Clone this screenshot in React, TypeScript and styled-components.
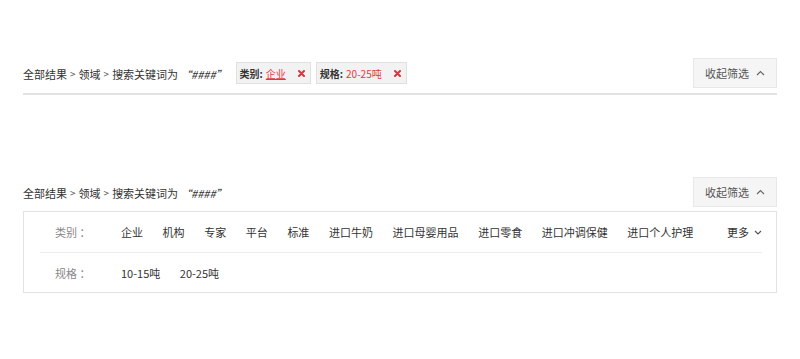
import React from 'react';
import styled, { createGlobalStyle } from 'styled-components';

const GlobalStyle = createGlobalStyle`
  body {
    margin: 0;
    background: #fff;
    font-family: "Noto Sans CJK SC", "Noto Sans", sans-serif;
    font-size: 11px;
    color: #333;
  }
`;

const categories = ['企业', '机构', '专家', '平台', '标准', '进口牛奶', '进口母婴用品', '进口零食', '进口冲调保健', '进口个人护理'];
const specs = ['10-15吨', '20-25吨'];

const ChevronUp: React.FC = () => (
  <svg width="9" height="6" viewBox="0 0 9 6">
    <polyline points="1,5 4.5,1.5 8,5" fill="none" stroke="#666" strokeWidth="1.2" />
  </svg>
);

const ChevronDown: React.FC = () => (
  <svg width="8" height="5" viewBox="0 0 8 5">
    <polyline points="1,1 4,4 7,1" fill="none" stroke="#555" strokeWidth="1.2" />
  </svg>
);

const CloseMark: React.FC = () => (
  <svg width="7" height="7" viewBox="0 0 7 7">
    <path d="M1 1 L6 6 M6 1 L1 6" stroke="#d9363e" strokeWidth="2" strokeLinecap="round" />
  </svg>
);

const Crumbs: React.FC = () => (
  <Breadcrumb>
    <span>全部结果</span>
    <Sep>&gt;</Sep>
    <span>领域</span>
    <Sep>&gt;</Sep>
    <span>搜索关键词为</span>
    <Keyword>“####”</Keyword>
  </Breadcrumb>
);

const CollapseButton: React.FC = () => (
  <ToggleButton>
    <span>收起筛选</span>
    <ChevronUp />
  </ToggleButton>
);

const App: React.FC = () => {
  return (
    <Page>
      <GlobalStyle />
      <Section>
        <Bar underline>
          <Left>
            <Crumbs />
            <Tags>
              <Tag>
                <TagLabel>类别:</TagLabel>
                <TagValue underline>企业</TagValue>
                <CloseMark />
              </Tag>
              <Tag>
                <TagLabel>规格:</TagLabel>
                <TagValue>20-25吨</TagValue>
                <CloseMark />
              </Tag>
            </Tags>
          </Left>
          <CollapseButton />
        </Bar>
      </Section>

      <Section second>
        <Bar>
          <Crumbs />
          <CollapseButton />
        </Bar>
        <Panel>
          <FilterRow divided>
            <Label>类别 ：</Label>
            <Values>
              {categories.map((c) => (
                <Value key={c}>{c}</Value>
              ))}
            </Values>
            <More>
              <span>更多</span>
              <ChevronDown />
            </More>
          </FilterRow>
          <FilterRow>
            <Label>规格 ：</Label>
            <Values>
              {specs.map((s) => (
                <Value key={s}>{s}</Value>
              ))}
            </Values>
          </FilterRow>
        </Panel>
      </Section>
    </Page>
  );
};

export default App;

const Page = styled.div`
  display: flex;
  flex-direction: column;
  padding: 58px 23px 0;
`;

const Section = styled.div<{ second?: boolean }>`
  display: flex;
  flex-direction: column;
  margin-top: ${(p) => (p.second ? '82px' : '0')};
`;

const Bar = styled.div<{ underline?: boolean }>`
  display: flex;
  align-items: center;
  justify-content: space-between;
  padding-bottom: ${(p) => (p.underline ? '5px' : '4px')};
  border-bottom: ${(p) => (p.underline ? '2px solid #e2e2e2' : 'none')};
`;

const Left = styled.div`
  display: flex;
  align-items: center;
`;

const Breadcrumb = styled.div`
  display: flex;
  align-items: center;
  color: #333;
  line-height: 16px;
  padding-top: 2px;
`;

const Sep = styled.span`
  margin: 0 3px;
  font-size: 10px;
  color: #555;
`;

const Keyword = styled.span`
  margin-left: 2px;
  font-style: italic;
`;

const Tags = styled.div`
  display: flex;
  gap: 5px;
  margin-left: 9px;
`;

const Tag = styled.div`
  display: flex;
  align-items: center;
  height: 20px;
  padding: 0 5px 0 3px;
  background: #f2f2f2;
  border: 1px solid #e0e0e0;
  color: #333;
  font-size: 10px;

  & > svg {
    margin-left: 12px;
  }
`;

const TagLabel = styled.span`
  font-weight: 700;
  margin-right: 3px;
`;

const TagValue = styled.span<{ underline?: boolean }>`
  color: #e4393c;
  text-decoration: ${(p) => (p.underline ? 'underline' : 'none')};
`;

const ToggleButton = styled.div`
  display: flex;
  align-items: center;
  justify-content: center;
  gap: 7px;
  width: 82px;
  height: 28px;
  background: #f5f5f5;
  border: 1px solid #e8e8e8;
  color: #555;
  font-size: 11px;

  & > svg {
    margin-top: -1px;
  }
`;

const Panel = styled.div`
  display: flex;
  flex-direction: column;
  border: 1px solid #e2e2e2;
  padding: 0 14px 0 16px;
`;

const FilterRow = styled.div<{ divided?: boolean }>`
  display: flex;
  align-items: center;
  height: ${(p) => (p.divided ? '40px' : '39px')};
  padding-left: 15px;
  border-bottom: ${(p) => (p.divided ? '1px solid #ececec' : 'none')};
`;

const Label = styled.div`
  width: 66px;
  color: #888;
`;

const Values = styled.div`
  display: flex;
  gap: 19.6px;
`;

const Value = styled.span`
  color: #333;
`;

const More = styled.div`
  display: flex;
  align-items: center;
  gap: 5px;
  margin-left: auto;
  color: #333;
`;
